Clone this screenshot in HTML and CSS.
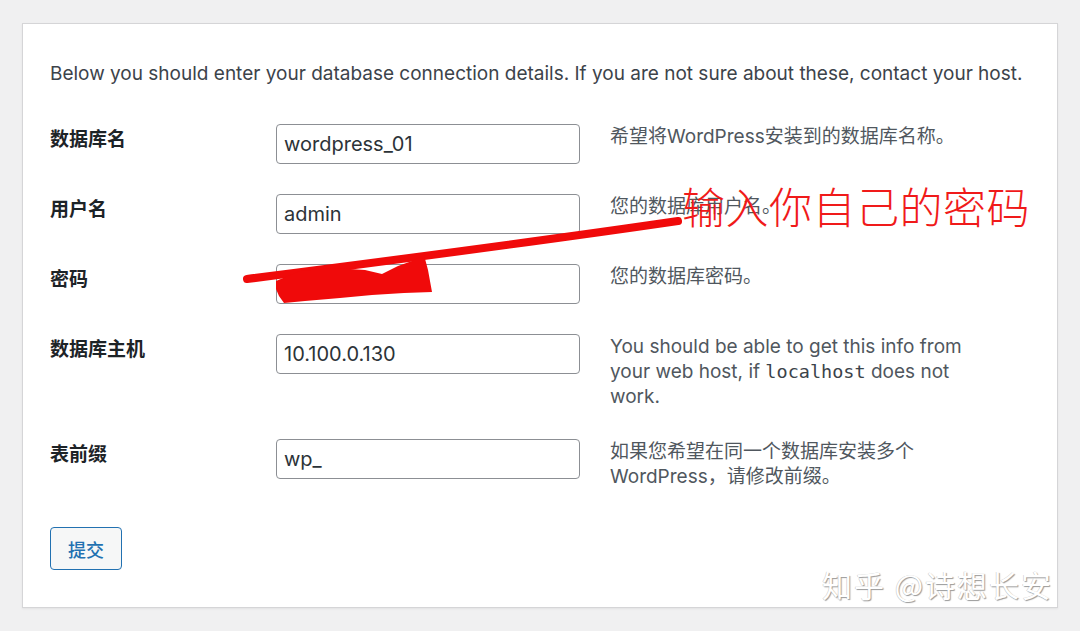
FILE: index.html
```html
<!DOCTYPE html>
<html lang="zh-CN">
<head>
  <meta charset="UTF-8">
  <meta name="viewport" content="width=device-width, initial-scale=1.0">
  <title>WordPress › 安装配置文件</title>
  <link rel="stylesheet" href="styles.css">
</head>
<body>
  <div class="card">
    <p class="intro">Below you should enter your database connection details. If you are not sure about these, contact your host.</p>

    <form class="setup-form">
      <label class="field-label" for="dbname">数据库名</label>
      <input class="field-input" type="text" id="dbname" value="wordpress_01">
      <p class="field-desc">希望将WordPress安装到的数据库名称。</p>

      <label class="field-label" for="uname">用户名</label>
      <input class="field-input" type="text" id="uname" value="admin">
      <p class="field-desc">您的数据库用户名。</p>

      <label class="field-label" for="pwd">密码</label>
      <input class="field-input" type="text" id="pwd" value="">
      <p class="field-desc">您的数据库密码。</p>

      <label class="field-label" for="dbhost">数据库主机</label>
      <input class="field-input" type="text" id="dbhost" value="10.100.0.130">
      <p class="field-desc">You should be able to get this info from your web host, if <code>localhost</code> does not work.</p>

      <label class="field-label" for="prefix">表前缀</label>
      <input class="field-input" type="text" id="prefix" value="wp_">
      <p class="field-desc">如果您希望在同一个数据库安装多个WordPress，请修改前缀。</p>
    </form>

    <button class="submit-btn" type="button">提交</button>
  </div>

  <!-- hand-drawn annotation on top of the screenshot -->
  <svg class="scribble" viewBox="0 0 1080 631" width="1080" height="631">
    <path d="M247 279 C 380 262, 520 244, 678 221" stroke="#f00a0a" stroke-width="8" stroke-linecap="round" fill="none"/>
    <path d="M276 281 L300 271 L335 268 L365 270 L382 274 L398 266 L412 261 L424 255 L428 270 L432 292 L404 293 L372 295 L340 298 L305 301 L284 303 L279 296 L276 289 Z" fill="#f00a0a"/>
  </svg>
  <div class="note">输入你自己的密码</div>
  <div class="watermark">知乎 @诗想长安</div>
</body>
</html>
```

FILE: styles.css
```css
body {
  margin: 0;
  width: 1080px;
  height: 631px;
  background-color: #f0f0f1;
  font-family: Inter, "Noto Sans CJK SC", sans-serif;
  font-size: 19px;
  line-height: 25px;
  color: #3c434a;
  position: relative;
  overflow: hidden;
  padding: 23px 0 0 22px;
  box-sizing: border-box;
}
.card {
  width: 1036px;
  box-sizing: border-box;
  background-color: #fff;
  border: 1px solid #d5d5d7;
  box-shadow: 0 1px 2px rgba(0, 0, 0, 0.06);
  padding: 37px 27px 37px 27px;
}
.intro {
  margin: 0 0 38px 0;
  color: #3c434a;
}
.setup-form {
  display: grid;
  grid-template-columns: 196px 304px 368px;
  column-gap: 30px;
  row-gap: 30px;
  align-items: start;
}
.field-label {
  font-weight: 700;
  color: #1d2327;
  padding-top: 3px;
}
.field-input {
  height: 40px;
  box-sizing: border-box;
  border: 1px solid #8c8f94;
  border-radius: 4px;
  padding: 0 7px;
  font-family: Inter, "Noto Sans CJK SC", sans-serif;
  font-size: 20px;
  color: #2c3338;
  background: #fff;
}
.field-desc {
  margin: 0;
  color: #50575e;
}
.field-desc code {
  font-family: "DejaVu Sans Mono", monospace;
  font-size: 18.5px;
  color: #3c434a;
}
.submit-btn {
  margin-top: 38px;
  width: 72px;
  height: 43px;
  border: 1px solid #2271b1;
  border-radius: 4px;
  background-color: #f6f7f7;
  color: #2271b1;
  font-family: "Noto Sans CJK SC", sans-serif;
  font-size: 18px;
  font-weight: 500;
}
.scribble {
  position: absolute;
  left: 0;
  top: 0;
  pointer-events: none;
}
.note {
  position: absolute;
  left: 682px;
  top: 180px;
  font-family: "Noto Sans CJK SC", sans-serif;
  font-weight: 300;
  font-size: 43px;
  line-height: 50px;
  color: #f01a1a;
  letter-spacing: 0.5px;
}
.watermark {
  position: absolute;
  left: 822px;
  top: 566px;
  font-family: "Noto Sans CJK SC", sans-serif;
  font-size: 30px;
  line-height: 36px;
  letter-spacing: 2px;
  color: #fff;
  text-shadow: 1px 1px 1px #9a9a9a, -0.5px -0.5px 0 #c8c8c8;
}
```
